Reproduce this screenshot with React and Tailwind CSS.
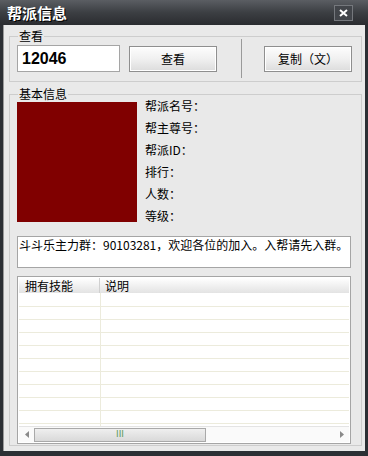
import React from "react";

const cjk = { fontFamily: '"Noto Sans CJK SC", "Noto Sans", sans-serif' };

function Legend({ children }) {
  return (
    <span className="absolute -top-[8px] left-[8px] bg-[#e9e9e9] px-[1px] text-[12px] leading-[14px] text-black">
      {children}
    </span>
  );
}

function Btn({ children }) {
  return (
    <button className="flex h-[26px] w-[88px] items-center justify-center border border-[#8f8f8f] bg-gradient-to-b from-[#fdfdfd] via-[#f0f0f0] to-[#dcdcdc] text-[12px] text-black shadow-[inset_0_0_0_1px_#ffffff]">
      {children}
    </button>
  );
}

const labels = ["帮派名号：", "帮主尊号：", "帮派ID：", "排行：", "人数：", "等级："];

export default function App() {
  const rows = Array.from({ length: 9 });
  return (
    <div className="flex h-[456px] w-[368px] flex-col bg-[#2c2f34]" style={cjk}>
      <div className="flex h-[25px] shrink-0 items-center justify-between bg-gradient-to-b from-[#5b5e63] via-[#3c3f43] to-[#2a2c30] pl-[7px] pr-[15px]">
        <span className="text-[15px] font-bold leading-none text-white [text-shadow:1px_1px_0_#000]">帮派信息</span>
        <div className="flex h-[16px] w-[19px] items-center justify-center border border-[#75787d] bg-[#42454a]">
          <svg width="9" height="8" viewBox="0 0 9 8">
            <path d="M1 1 L8 7 M8 1 L1 7" stroke="#ffffff" strokeWidth="2" />
          </svg>
        </div>
      </div>

      <div className="mx-[3px] mb-[5px] flex flex-1 flex-col overflow-hidden border-l border-[#9a9a9a] bg-[#e9e9e9] pl-[5px] pr-[3px] pt-[11px]">
        {/* 查看 */}
        <div className="relative flex h-[46px] w-[353px] shrink-0 items-start border border-[#cdcdcd] pl-[7px] pt-[8px]">
          <Legend>查看</Legend>
          <div className="flex h-[27px] w-[103px] items-center border border-[#a5a5a5] bg-white pl-[4px] text-[16px] font-bold text-black" style={{ fontFamily: '"Liberation Sans", sans-serif' }}>
            12046
          </div>
          <div className="ml-[9px] mt-[1px]">
            <Btn>查看</Btn>
          </div>
          <div className="-mt-[6px] ml-[24px] h-[39px] w-[1px] bg-[#9a9a9a]" />
          <div className="ml-[22px] mt-[1px]">
            <Btn>复制（文）</Btn>
          </div>
        </div>

        {/* 基本信息 */}
        <div className="relative mt-[12px] flex h-[352px] w-[353px] shrink-0 flex-col border border-[#cdcdcd] px-[7px]">
          <Legend>基本信息</Legend>
          <div className="flex h-[132px] shrink-0 items-start">
            <div className="mt-[7px] h-[120px] w-[120px] bg-[#800000]" />
            <div className="ml-[8px] flex flex-col">
              {labels.map((l) => (
                <div key={l} className="h-[22px] pt-[5px] text-[12px] leading-[12px] text-black">{l}</div>
              ))}
            </div>
          </div>
          <div className="mt-[9px] h-[32px] w-[334px] shrink-0 border border-[#a5a5a5] bg-white pl-[1px] pt-[1px] text-[12px] leading-[14px] text-black">
            斗斗乐主力群：90103281，欢迎各位的加入。入帮请先入群。
          </div>
          <div className="mt-[8px] flex h-[168px] w-[334px] shrink-0 flex-col border border-[#a5a5a5] bg-white p-[1px]">
            <div className="flex h-[15px] shrink-0 bg-gradient-to-b from-[#ffffff] to-[#e3e3e3] text-[12px] leading-[15px] text-black">
              <div className="w-[81px] border-r border-[#d0d0d0] pl-[6px]">拥有技能</div>
              <div className="pl-[5px]">说明</div>
            </div>
            <div className="relative flex min-h-0 flex-1 flex-col overflow-hidden">
              <div className="h-[14px] shrink-0 border-b border-[#ecebdc]" />
              {rows.map((_, i) => (
                <div key={i} className="h-[13px] shrink-0 border-b border-[#ecebdc]" />
              ))}
              <div className="absolute bottom-0 left-[81px] top-0 w-[1px] bg-[#ecebdc]" />
            </div>
            <div className="flex h-[16px] shrink-0 items-center border-t border-[#e4e4e4] bg-[#fafafa]">
              <div className="flex w-[15px] items-center justify-center">
                <svg width="4" height="7" viewBox="0 0 4 7"><path d="M4 0 L0 3.5 L4 7 Z" fill="#8a8a8a" /></svg>
              </div>
              <div className="flex h-[14px] w-[172px] items-center justify-center border border-[#a9a9a9] bg-gradient-to-b from-[#efefef] to-[#d9d9d9]">
                <span className="text-[9px] leading-none text-[#5a9a5a]" style={{ fontFamily: '"DejaVu Sans", sans-serif' }}>III</span>
              </div>
              <div className="flex-1" />
              <div className="flex w-[15px] items-center justify-center">
                <svg width="4" height="7" viewBox="0 0 4 7"><path d="M0 0 L4 3.5 L0 7 Z" fill="#8a8a8a" /></svg>
              </div>
            </div>
          </div>
        </div>
      </div>
    </div>
  );
}
